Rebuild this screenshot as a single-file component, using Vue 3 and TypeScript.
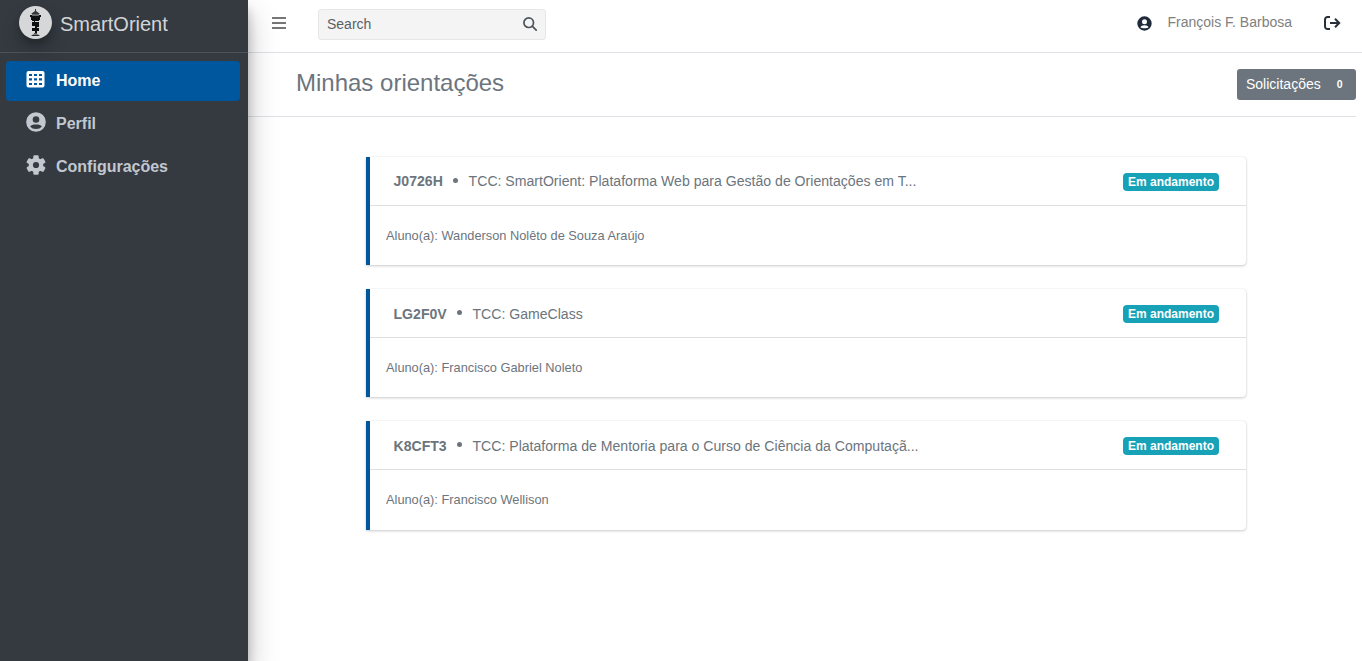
<script setup lang="ts">
interface Orientation {
  code: string
  title: string
  student: string
}

const orientations: Orientation[] = [
  {
    code: 'J0726H',
    title: 'TCC: SmartOrient: Plataforma Web para Gestão de Orientações em T...',
    student: 'Wanderson Nolêto de Souza Araújo',
  },
  { code: 'LG2F0V', title: 'TCC: GameClass', student: 'Francisco Gabriel Noleto' },
  {
    code: 'K8CFT3',
    title: 'TCC: Plataforma de Mentoria para o Curso de Ciência da Computaçã...',
    student: 'Francisco Wellison',
  },
]
</script>

<template>
  <div class="layout">
    <aside class="sidebar">
      <div class="brand">
        <span class="brand-logo">
          <svg width="33" height="33" viewBox="0 0 33 33">
            <path d="M16 3h1v2l4 3H12l4-3z" fill="#333" />
            <path d="M13 8h7v2h-7z" fill="#777" />
            <path d="M11 9h2v1h7V9h2v2h-1v3h-9v-3h-1z" fill="#050505" />
            <path d="M13 13h7v2h-4v1h4v5h-2v1h2v3h-2v2h-2v-2h-3v-3h3v-2h-3v-4h2v-1h-2z" fill="#050505" />
            <path d="M15 27h3v1h-3z" fill="#555" />
            <path d="M12 30l2-1.500h5l2 1.500z" fill="#222" />
          </svg>
        </span>
        <span class="brand-name">SmartOrient</span>
      </div>
      <nav class="menu">
        <a class="menu-item active">
          <svg class="menu-icon" width="19" height="17" viewBox="0 0 19 17">
            <path
              fill="currentColor"
              fill-rule="evenodd"
              d="M2.500 0h14a2 2 0 0 1 2 2v12.500a2 2 0 0 1-2 2h-14a2 2 0 0 1-2-2v-12.500a2 2 0 0 1 2-2zM3 3v2h3V3zM8 3v2h3V3zM13 3v2h3V3zM3 7.300v2.200h3V7.300zM8 7.300v2.200h3V7.300zM13 7.300v2.200h3V7.300zM3 12v2h3V12zM8 12v2h3V12zM13 12v2h3V12z"
            />
          </svg>
          <span>Home</span>
        </a>
        <a class="menu-item">
          <svg class="menu-icon" width="20" height="20" viewBox="0 0 24 24">
            <path
              fill="currentColor"
              fill-rule="evenodd"
              d="M12 .2a11.800 11.800 0 1 0 0 23.600 11.800 11.800 0 0 0 0-23.600zM12 5a4 4 0 1 1 0 8 4 4 0 0 1 0-8zM12 20.500c-3 0-5.400-1-7-3 1.200-1.800 3.300-2.500 7-2.500s5.800.7 7 2.500c-1.600 2-4 3-7 3z"
            />
          </svg>
          <span>Perfil</span>
        </a>
        <a class="menu-item">
          <svg class="menu-icon" width="20" height="20" viewBox="-10 -10 20 20">
            <g fill="currentColor">
              <circle r="7.300" />
              <rect x="-2.700" y="-9.800" width="5.400" height="19.600" rx="1.200" />
              <rect x="-2.700" y="-9.800" width="5.400" height="19.600" rx="1.200" transform="rotate(60)" />
              <rect x="-2.700" y="-9.800" width="5.400" height="19.600" rx="1.200" transform="rotate(120)" />
            </g>
            <circle r="3.100" fill="#343a40" />
          </svg>
          <span>Configurações</span>
        </a>
      </nav>
    </aside>

    <div class="main">
      <header class="topbar">
        <svg class="bars" width="14" height="12" viewBox="0 0 14 12" fill="#767676">
          <rect width="14" height="2" rx=".3" />
          <rect y="5" width="14" height="2" rx=".3" />
          <rect y="10" width="14" height="2" rx=".3" />
        </svg>
        <div class="search">
          <span>Search</span>
          <svg width="14" height="14" viewBox="0 0 14 14" fill="none" stroke="#4d5358" stroke-width="1.700">
            <circle cx="5.700" cy="5.700" r="4.800" />
            <path d="M9.200 9.200l4 4" stroke-linecap="round" />
          </svg>
        </div>
        <svg class="user-icon" width="15" height="15" viewBox="0 0 24 24">
          <path
            fill="#1f2a3a"
            fill-rule="evenodd"
            d="M12 .5a11.500 11.500 0 1 0 0 23 11.500 11.500 0 0 0 0-23zM12 5a4 4 0 1 1 0 8 4 4 0 0 1 0-8zM12 19.500c-3 0-5-.5-6.500-1.500.8-2.200 3-3.300 6.500-3.300s5.700 1.100 6.500 3.300c-1.500 1-3.500 1.500-6.500 1.500z"
          />
        </svg>
        <span class="user-name">François F. Barbosa</span>
        <svg class="logout" width="17" height="14" viewBox="0 0 17 14" fill="none" stroke="#2a3038" stroke-width="2">
          <path d="M6 1H3.500A2.500 2.500 0 0 0 1 3.500v7A2.500 2.500 0 0 0 3.500 13H6" />
          <path d="M6 7h9M11 2.800L15.200 7 11 11.200" />
        </svg>
      </header>

      <div class="page-head">
        <h1>Minhas orientações</h1>
        <button class="requests" type="button"><span>Solicitações</span><span class="count">0</span></button>
      </div>

      <main class="cards">
        <article v-for="item in orientations" :key="item.code" class="card">
          <div class="card-header">
            <strong>{{ item.code }}</strong>
            <span class="dot"></span>
            <span class="card-title">{{ item.title }}</span>
            <span class="badge">Em andamento</span>
          </div>
          <div class="card-body">Aluno(a): {{ item.student }}</div>
        </article>
      </main>
    </div>
  </div>
</template>

<style>
body {
  margin: 0;
  overflow: hidden;
}
</style>

<style scoped>
* {
  box-sizing: border-box;
}
.layout {
  display: flex;
  height: 661px;
  overflow: hidden;
  background: #fff;
  color: #6c757d;
  font-family: 'Liberation Sans', Arial, sans-serif;
}
.sidebar {
  position: relative;
  z-index: 2;
  flex: 0 0 248px;
  background: #343a40;
  box-shadow: 0 14px 28px rgba(0, 0, 0, 0.25), 0 10px 10px rgba(0, 0, 0, 0.22);
}
.brand {
  display: flex;
  height: 53px;
  padding: 6px 0 0 19px;
  border-bottom: 1px solid #4b545c;
}
.brand-logo {
  width: 33px;
  height: 33px;
  border-radius: 50%;
  background: #fff;
  opacity: 0.8;
  box-shadow: 0 10px 20px rgba(0, 0, 0, 0.19), 0 6px 6px rgba(0, 0, 0, 0.23);
}
.brand-logo svg {
  display: block;
}
.brand-name {
  margin-left: 8px;
  color: rgba(255, 255, 255, 0.8);
  font-size: 20px;
  line-height: 36px;
}
.menu {
  display: flex;
  flex-direction: column;
  gap: 3px;
  padding: 8px 8px 0 6px;
}
.menu-item {
  display: flex;
  align-items: center;
  height: 40px;
  border-radius: 4px;
  color: #c2c7d0;
  font-size: 16px;
  font-weight: 700;
  line-height: 24px;
}
.menu-item.active {
  background: #00579d;
  color: #fff;
}
.menu-icon {
  flex: none;
  margin: -4px 10.500px 0 19.500px;
}
.menu-item.active .menu-icon {
  margin: -3px 11px 0 20px;
}
.main {
  flex: 1;
  min-width: 0;
}
.topbar {
  display: flex;
  align-items: flex-start;
  height: 53px;
  border-bottom: 1px solid #dee2e6;
  font-size: 14px;
}
.bars {
  margin: 17px 0 0 24px;
}
.search {
  display: flex;
  align-items: center;
  justify-content: space-between;
  width: 228px;
  height: 31px;
  margin: 9px 0 0 32px;
  padding: 0 8px 2px;
  border: 1px solid #e6e6e6;
  border-radius: 3px;
  background: #f4f4f4;
  color: #5a5f64;
}
.user-icon {
  margin: 16.400px 0 0 auto;
}
.user-name {
  margin: 12px 0 0 16px;
  color: #808080;
  line-height: 21px;
}
.logout {
  margin: 16px 21px 0 32px;
}
.page-head {
  display: flex;
  justify-content: space-between;
  height: 64px;
  margin-right: 6px;
  padding: 16px 0 0 48px;
  border-bottom: 1px solid #dee2e6;
}
h1 {
  margin: 0;
  font-size: 24px;
  font-weight: 400;
  line-height: 28px;
}
.requests {
  display: flex;
  width: 119px;
  height: 31px;
  padding: 0 0 0 9px;
  border: 0;
  border-radius: 3px;
  background: #6c757d;
  color: #fff;
  font-family: inherit;
  font-size: 14px;
  line-height: 31px;
}
.count {
  margin-left: 16px;
  font-size: 10.500px;
  font-weight: 700;
}
.cards {
  display: flex;
  flex-direction: column;
  gap: 23.850px;
  width: 880px;
  margin: 40px 0 0 118px;
}
.card {
  height: 108.300px;
  border-left: 4px solid #00579d;
  border-radius: 0 4px 4px 0;
  background: #fff;
  box-shadow: 0 0 1px rgba(0, 0, 0, 0.125), 0 1px 3px rgba(0, 0, 0, 0.2);
}
.card-header {
  display: flex;
  align-items: center;
  height: 49px;
  padding: 0.800px 27px 0 23.500px;
  border-bottom: 1px solid #dfdfdf;
  font-size: 14.080px;
}
.dot {
  width: 5.500px;
  height: 5.500px;
  margin: -2.200px 10.200px 0 10.100px;
  border-radius: 50%;
  background: #6c757d;
}
.badge {
  height: 18px;
  margin: 1.200px 0 0 auto;
  padding: 0 5px;
  border-radius: 4px;
  background: #17a2b8;
  color: #fff;
  font-size: 12px;
  font-weight: 700;
  line-height: 18px;
}
.card-body {
  padding: 20px 16px;
  font-size: 12.800px;
  line-height: 20px;
}
</style>
